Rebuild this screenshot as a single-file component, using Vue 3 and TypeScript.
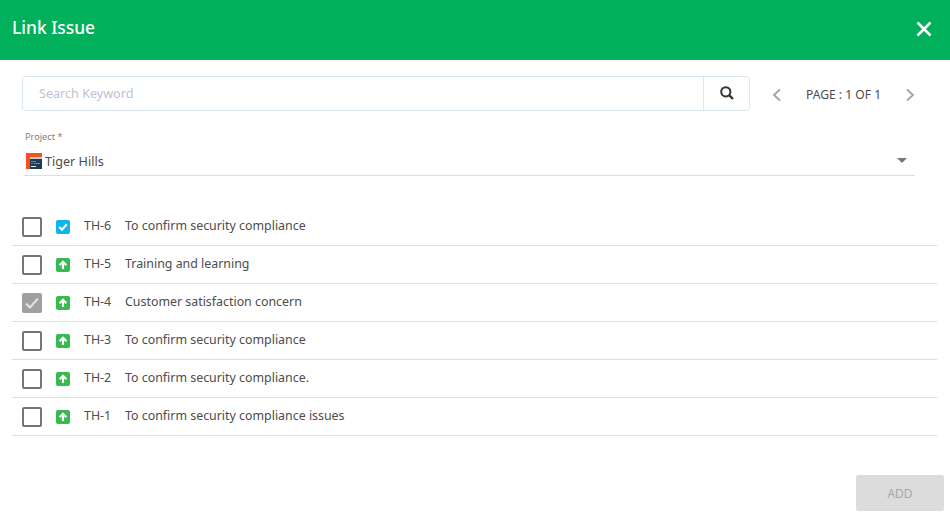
<script setup lang="ts">
interface Issue { key: string; title: string; type: 'task' | 'story'; checked: boolean }
const issues: Issue[] = [
  { key: 'TH-6', title: 'To confirm security compliance', type: 'task', checked: false },
  { key: 'TH-5', title: 'Training and learning', type: 'story', checked: false },
  { key: 'TH-4', title: 'Customer satisfaction concern', type: 'story', checked: true },
  { key: 'TH-3', title: 'To confirm security compliance', type: 'story', checked: false },
  { key: 'TH-2', title: 'To confirm security compliance.', type: 'story', checked: false },
  { key: 'TH-1', title: 'To confirm security compliance issues', type: 'story', checked: false },
]
</script>

<template>
  <div class="dialog">
    <header class="head">
      <h1>Link Issue</h1>
      <svg class="close" width="18" height="18" viewBox="0 0 18 18"><path d="M2.5 2.5 15.5 15.5M15.5 2.5 2.5 15.5" stroke="#fff" stroke-width="2.6" fill="none"/></svg>
    </header>
    <div class="tools">
      <div class="search">
        <span class="ph">Search Keyword</span>
        <span class="go">
          <svg width="16" height="16" viewBox="0 0 16 16"><circle cx="6.8" cy="6.8" r="4.6" stroke="#333" stroke-width="2" fill="none"/><path d="M10.3 10.3 14 14" stroke="#333" stroke-width="2.4" fill="none"/></svg>
        </span>
      </div>
      <div class="pager">
        <svg class="chev" width="10" height="14" viewBox="0 0 10 14"><path d="M8 1.5 2 7l6 5.5" stroke="#a3a3a3" stroke-width="1.8" fill="none"/></svg>
        <span class="page">PAGE : 1 OF 1</span>
        <svg class="chev" width="10" height="14" viewBox="0 0 10 14"><path d="M2 1.5 8 7l-6 5.5" stroke="#a3a3a3" stroke-width="1.8" fill="none"/></svg>
      </div>
    </div>
    <div class="field">
      <label>Project *</label>
      <div class="select">
        <svg class="logo" width="16" height="16" viewBox="0 0 16 16">
          <rect width="16" height="16" fill="#f4511e"/>
          <rect x="4" y="4" width="12" height="12" fill="#1f3a55"/>
          <rect x="4" y="4" width="12" height="2" fill="#c9ccd0"/>
          <rect x="5" y="8" width="5" height="1" fill="#e8553a"/>
          <rect x="8" y="10" width="6" height="1" fill="#35a7c9"/>
          <rect x="5" y="10" width="2" height="1" fill="#e8553a"/>
          <rect x="5" y="13" width="5" height="1" fill="#e6e6e6"/>
        </svg>
        <span class="sel-text">Tiger Hills</span>
        <span class="caret"></span>
      </div>
    </div>
    <ul class="list">
      <li v-for="i in issues" :key="i.key" class="row">
        <span class="box" :class="{ on: i.checked }">
          <svg v-if="i.checked" width="16" height="14" viewBox="0 0 16 14"><path d="M2 7.5 6 11.5 14 2.5" stroke="#e4e4e4" stroke-width="2" fill="none"/></svg>
        </span>
        <span class="type" :class="i.type">
          <svg v-if="i.type === 'task'" width="10" height="10" viewBox="0 0 10 10"><path d="M1.2 5 4 7.8 8.8 2.2" stroke="#fff" stroke-width="2.1" fill="none"/></svg>
          <svg v-else width="10" height="10" viewBox="0 0 10 10"><path d="M5 9V2.5M1.6 5.2 5 1.8l3.4 3.4" stroke="#fff" stroke-width="2.1" fill="none"/></svg>
        </span>
        <span class="key">{{ i.key }}</span>
        <span class="title">{{ i.title }}</span>
      </li>
    </ul>
    <footer class="foot"><button class="add" type="button" disabled>ADD</button></footer>
  </div>
</template>

<style>
html, body { margin: 0; background: #fff; }
</style>

<style scoped>
.dialog { width: 950px; height: 516px; font-family: "Noto Sans", sans-serif; color: #4c4c4c; display: flex; flex-direction: column; overflow: hidden; }
.head { height: 60px; flex: none; background: #00b05a; display: flex; align-items: center; justify-content: space-between; padding: 0 17px 0 12px; box-sizing: border-box; }
.head h1 { margin: 0 0 7px; font-size: 17.4px; font-weight: 500; color: #fff; }
.close { margin-bottom: 3px; }
.tools { display: flex; align-items: center; padding: 16px 0 0 22px; }
.search { width: 728px; height: 35px; box-sizing: border-box; border: 1px solid #dbe7ee; border-radius: 4px; display: flex; align-items: center; justify-content: space-between; }
.ph { padding-left: 16px; font-size: 12.6px; color: #c0c2d0; }
.go { width: 46px; height: 100%; border-left: 1px solid #dbe7ee; display: flex; align-items: center; justify-content: center; box-sizing: border-box; padding-bottom: 2px; }
.pager { display: flex; align-items: center; margin-left: 22px; }
.chev { margin-top: 3px; }
.page { font-size: 12.1px; color: #4c4c4c; margin: 1px 24px 0 24px; white-space: nowrap; }
.field { margin: 19px 35px 0 24px; }
.field label { display: block; font-size: 9.2px; line-height: 14px; color: #808080; padding-left: 1px; }
.select { height: 30px; display: flex; align-items: center; border-bottom: 1px solid #ddd; box-sizing: border-box; margin-top: 2px; }
.logo { margin: 0 3px 0 2px; }
.sel-text { font-size: 12.6px; color: #4c4c4c; margin-top: 2px; }
.caret { margin-left: auto; margin-right: 8px; border: 5px solid transparent; border-top: 5px solid #777; border-bottom: 0; }
.list { list-style: none; margin: 32px 13px 0 12px; padding: 0; }
.row { height: 38px; box-sizing: border-box; border-bottom: 1px solid #ddd; display: flex; align-items: center; padding-left: 10px; font-size: 12.4px; color: #4c4c4c; }
.box { width: 20px; height: 20px; box-sizing: border-box; border: 2px solid #757575; border-radius: 2px; display: flex; align-items: center; justify-content: center; flex: none; }
.box.on { background: #a0a0a0; border-color: #a0a0a0; }
.type { width: 14px; height: 14px; border-radius: 2px; margin-left: 14px; display: flex; align-items: center; justify-content: center; flex: none; }
.type.task { background: #0db4ee; }
.type.story { background: #36bb50; }
.key, .title { margin-bottom: 3px; }
.key { margin-left: 14px; width: 41px; flex: none; }
.foot { margin-top: auto; display: flex; justify-content: flex-end; padding: 0 6px 5px 0; }
.add { width: 88px; height: 36px; border: 0; border-radius: 2px; background: #dcdcdc; color: #a8a8a8; font-family: inherit; font-size: 12px; }
</style>
